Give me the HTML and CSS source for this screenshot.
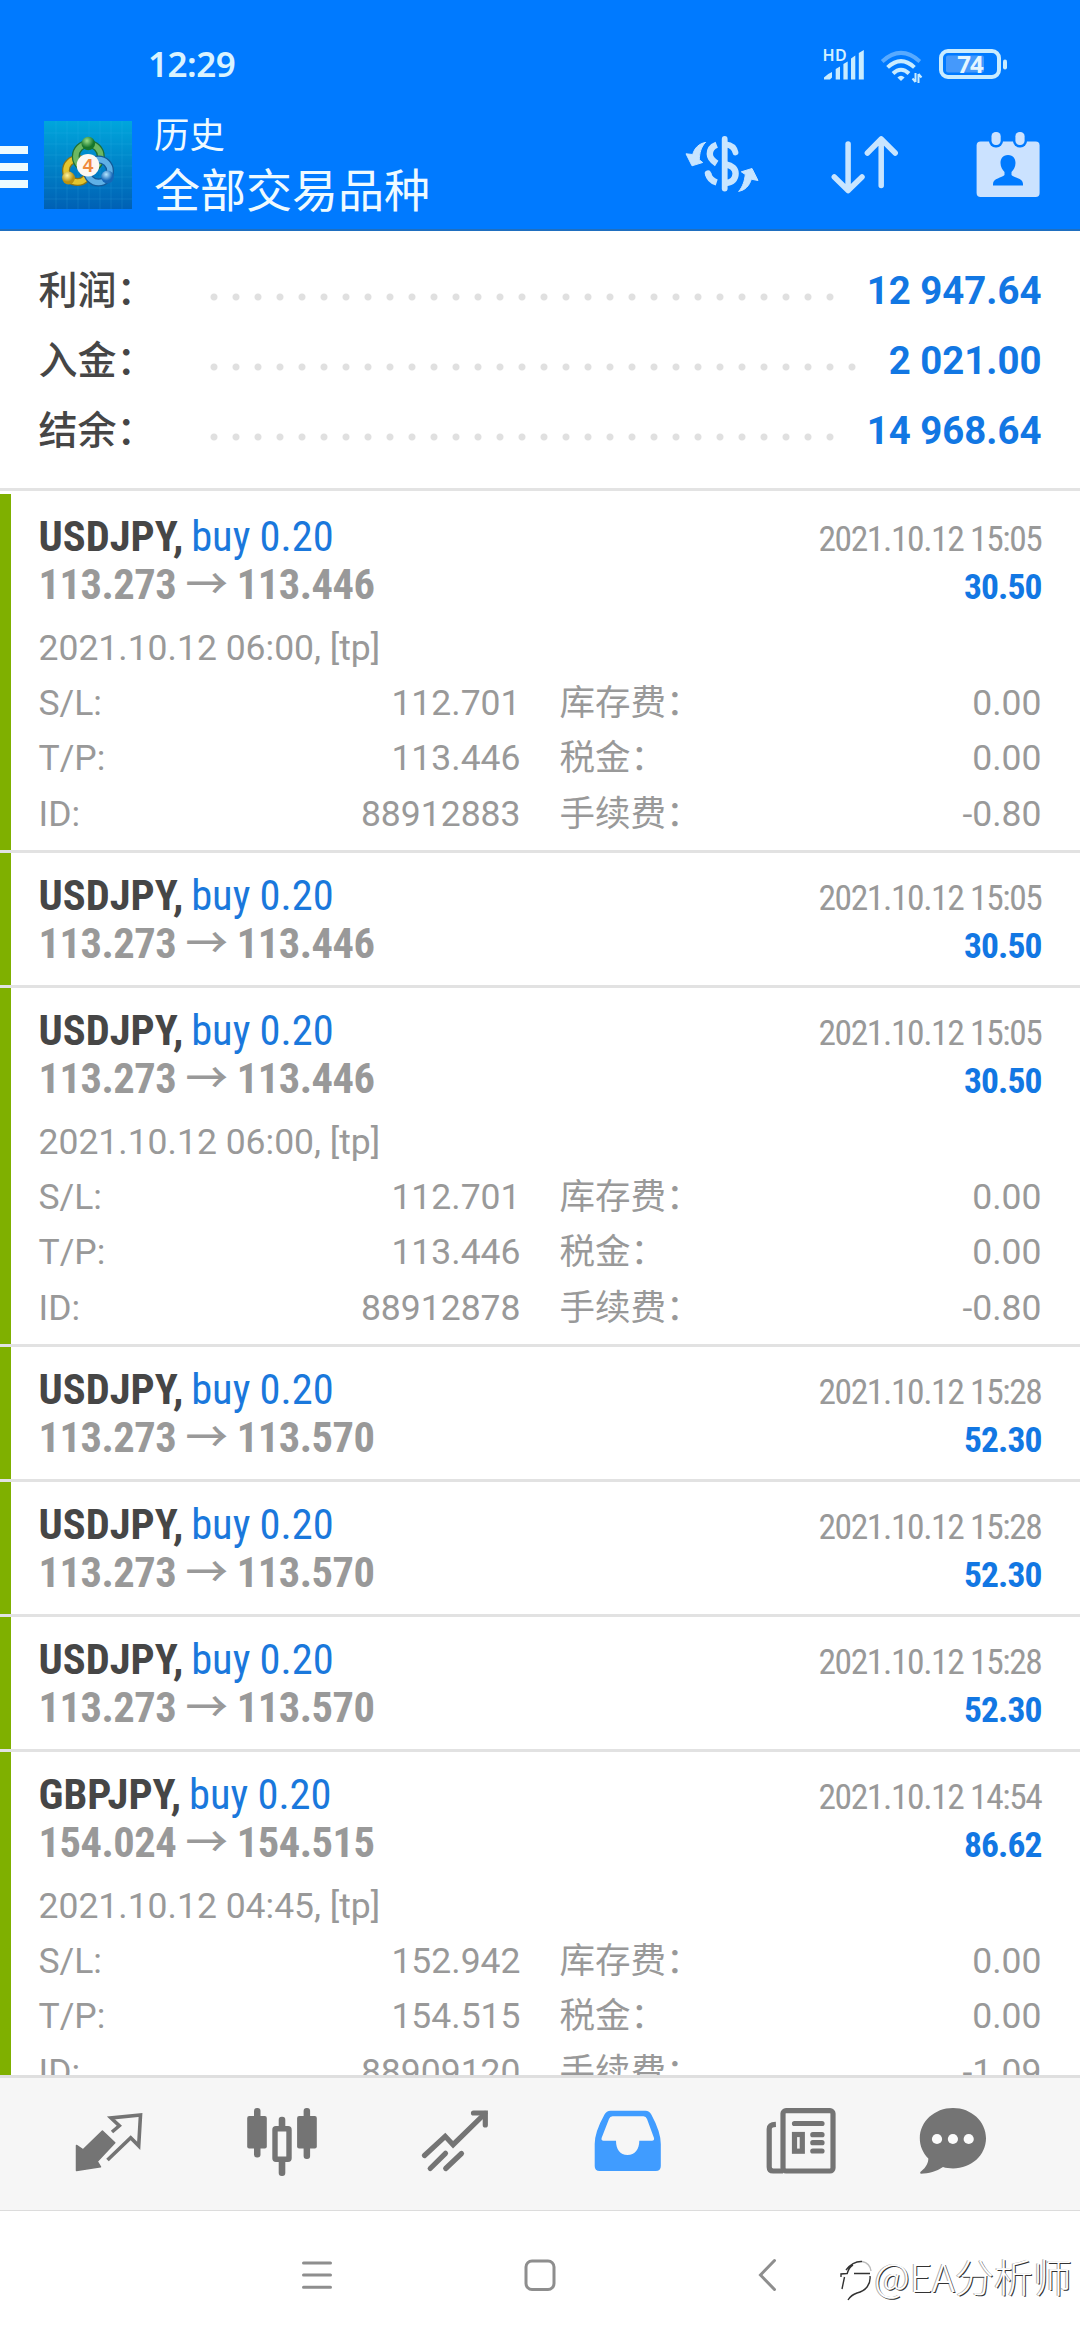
FILE: index.html
```html
<!DOCTYPE html>
<html lang="zh-CN">
<head>
<meta charset="utf-8">
<title>历史</title>
<link rel="stylesheet" href="styles.css">
</head>
<body>
<div class="screen">
  <header class="header">
    <div class="status">
      <span class="clock">12:29</span>
      <div class="status-icons">
        <svg class="signal" width="46" height="36" viewBox="0 0 46 36">
          <text x="0.500" y="15" class="hd">HD</text>
          <path d="M2 33.5V31.5Q6 27.5 10 26V31.5L8 33.5H4ZM13.7 33.5V23L18 20.5V33.5ZM21.4 33.5V18L25.7 15.5V33.5ZM29 33.5V12.5L33.3 9.5V33.5ZM36.8 33.5V7L41.8 4V33.5Z" fill="#c9ecff"/>
        </svg>
        <svg class="wifi" width="46" height="36" viewBox="0 0 46 36" fill="none" stroke="#c9ecff" stroke-width="4">
          <path d="M4.2 15.4Q23 -1.6 41.800 15.400" stroke="#58aaff"/>
          <path d="M9.600 21.400Q23 9 36.400 21.400"/>
          <path d="M15 27.500Q23 20 31 27.500"/>
          <path d="M19.400 31.500Q23 28 26.600 31.500L23 35Z" fill="#c9ecff" stroke="none"/>
          <path d="M37.500 27V36M34.500 32.500L37.500 36M40.500 37V28M43.500 31.500L40.500 28" stroke-width="2"/>
        </svg>
        <svg class="battery" width="70" height="36" viewBox="0 0 70 36">
          <rect x="7" y="9.500" width="38" height="17" rx="2" fill="#4599fb"/>
          <rect x="2" y="5" width="58" height="26" rx="7" fill="none" stroke="#c9ecff" stroke-width="4"/>
          <rect x="64" y="13.500" width="4" height="10" rx="2" fill="#c9ecff"/>
          <text x="31" y="26.500" text-anchor="middle" class="level">74</text>
        </svg>
      </div>
    </div>
    <div class="toolbar">
      <div class="burger"><i></i><i></i><i></i></div>
      <svg class="logo" width="88" height="88" viewBox="0 0 88 88">
        <defs>
          <linearGradient id="sky" x1="0" y1="0" x2="0" y2="1"><stop offset="0" stop-color="#00a6dc"/><stop offset="1" stop-color="#0060b4"/></linearGradient>
          <radialGradient id="gr" cx=".4" cy=".3"><stop offset="0" stop-color="#9be08a"/><stop offset="1" stop-color="#16762c"/></radialGradient>
          <radialGradient id="ye" cx=".4" cy=".3"><stop offset="0" stop-color="#fff6a0"/><stop offset="1" stop-color="#b99110"/></radialGradient>
          <radialGradient id="bl" cx=".4" cy=".3"><stop offset="0" stop-color="#b4e6ff"/><stop offset="1" stop-color="#1567b8"/></radialGradient>
        </defs>
        <rect width="88" height="88" fill="url(#sky)"/>
        <path d="M12 0V88M23 0V88M34 0V88M45 0V88M56 0V88M67 0V88M78 0V88M0 12H88M0 23H88M0 34H88M0 45H88M0 56H88M0 67H88M0 78H88" stroke="#3fc0ee" stroke-opacity=".16"/>
        <g fill="none">
          <circle cx="33.500" cy="49.500" r="11.500" stroke="#8c7414" stroke-width="8"/>
          <circle cx="33.500" cy="49.500" r="11.500" stroke="#e3c52f" stroke-width="5.500"/>
          <circle cx="44.300" cy="35.500" r="12.500" stroke="#1d6f35" stroke-width="8"/>
          <circle cx="44.300" cy="35.500" r="12.500" stroke="#6cb862" stroke-width="5.500"/>
          <circle cx="54.500" cy="50" r="11.500" stroke="#135a98" stroke-width="8"/>
          <circle cx="54.500" cy="50" r="11.500" stroke="#5fb0e6" stroke-width="5.500"/>
        </g>
        <circle cx="44.300" cy="22.500" r="6.800" fill="url(#gr)"/>
        <circle cx="24.500" cy="57" r="6.400" fill="url(#ye)"/>
        <circle cx="63.500" cy="56" r="6.400" fill="url(#bl)"/>
        <circle cx="44" cy="44.300" r="11.300" fill="#fdf8f2"/>
        <text x="44" y="51" text-anchor="middle" class="logo-num">4</text>
      </svg>
      <div class="titles">
        <div class="title-small">历史</div>
        <div class="title-big">全部交易品种</div>
      </div>
      <div class="actions">
        <svg width="80" height="80" viewBox="0 0 80 80" fill="none" stroke="#c8e5ff" stroke-linecap="round">
          <path d="M42.700 16V65.500" stroke-width="5.800"/>
          <path d="M34.700 21.800C29 24 27.800 28 27.800 31C27.800 34.500 30 37.500 34.700 40.500M26 50.500C27 55 30 58 34.700 59.500" stroke-width="6.400" stroke-linecap="butt"/>
          <path d="M26 50.500L26.300 51.300" stroke-width="6.400"/>
          <path d="M44 21.500C49 22 52.500 25 53.500 29.500" stroke-width="5.800"/>
          <path d="M44 41.500C50 42.500 53.600 46 53.600 50.500C53.600 56 50 59.500 44 60" stroke-width="6.400"/>
          <path d="M23.300 19.500C17 20.500 12.500 25 10.700 31.500L4 30.800L10 42.800L20.700 39.500L17.300 36.800C17.500 30 19 24 23.300 19.500ZM57 68.200C63 67.500 67.500 62.500 69.300 56.200L76 57.500L70 45.500L59.300 48.800L63.300 51.500C62.500 58 61 63 57 68.200Z" fill="#c8e5ff" stroke-width="1" stroke-linejoin="round"/>
        </svg>
        <svg width="80" height="80" viewBox="0 0 80 80" fill="none" stroke="#c8e5ff" stroke-width="5.500" stroke-linecap="round" stroke-linejoin="round">
          <path d="M23.100 21V67.500M9.300 54L23.100 67.500L37 54M56.200 62.500V16M42.400 30L56.200 16L70.200 30"/>
        </svg>
        <svg width="80" height="80" viewBox="0 0 80 80">
          <rect x="8.600" y="18.500" width="63" height="55.500" rx="4" fill="#cbe2ff"/>
          <rect x="21" y="6.500" width="14" height="18" rx="6.500" fill="#007aff"/>
          <rect x="45" y="6.500" width="14" height="18" rx="6.500" fill="#007aff"/>
          <rect x="23.500" y="9" width="9.200" height="13" rx="4.200" fill="#cbe2ff"/>
          <rect x="47.400" y="9" width="9.200" height="13" rx="4.200" fill="#cbe2ff"/>
          <path d="M40 32C34.500 32 32.500 36 32.500 40C32.500 44 34.500 47 36.500 49V52C34 55 25 55 25 61V62.500H55V61C55 55 46 55 43.500 52V49C45.500 47 47.500 44 47.500 40C47.500 36 45.500 32 40 32Z" fill="#007aff"/>
        </svg>
      </div>
    </div>
  </header>

  <section class="summary">
    <div class="sum-row"><span class="sum-label">利润：</span><span class="dots"></span><span class="sum-value">12 947.64</span></div>
    <div class="sum-row"><span class="sum-label">入金：</span><span class="dots"></span><span class="sum-value">2 021.00</span></div>
    <div class="sum-row"><span class="sum-label">结余：</span><span class="dots"></span><span class="sum-value">14 968.64</span></div>
  </section>

  <main class="trades">
    <article class="trade">
      <div class="line"><span class="deal"><b>USDJPY,</b> buy 0.20</span><span class="time">2021.10.12 15:05</span></div>
      <div class="line"><span class="prices">113.273 <span class="arrow">→</span> 113.446</span><span class="profit">30.50</span></div>
      <div class="comment">2021.10.12 06:00, [tp]</div>
      <div class="details">
        <div><span>S/L:</span><span>112.701</span></div><div><span>库存费：</span><span>0.00</span></div>
        <div><span>T/P:</span><span>113.446</span></div><div><span>税金：</span><span>0.00</span></div>
        <div><span>ID:</span><span>88912883</span></div><div><span>手续费：</span><span>-0.80</span></div>
      </div>
    </article>
    <article class="trade">
      <div class="line"><span class="deal"><b>USDJPY,</b> buy 0.20</span><span class="time">2021.10.12 15:05</span></div>
      <div class="line"><span class="prices">113.273 <span class="arrow">→</span> 113.446</span><span class="profit">30.50</span></div>
    </article>
    <article class="trade">
      <div class="line"><span class="deal"><b>USDJPY,</b> buy 0.20</span><span class="time">2021.10.12 15:05</span></div>
      <div class="line"><span class="prices">113.273 <span class="arrow">→</span> 113.446</span><span class="profit">30.50</span></div>
      <div class="comment">2021.10.12 06:00, [tp]</div>
      <div class="details">
        <div><span>S/L:</span><span>112.701</span></div><div><span>库存费：</span><span>0.00</span></div>
        <div><span>T/P:</span><span>113.446</span></div><div><span>税金：</span><span>0.00</span></div>
        <div><span>ID:</span><span>88912878</span></div><div><span>手续费：</span><span>-0.80</span></div>
      </div>
    </article>
    <article class="trade">
      <div class="line"><span class="deal"><b>USDJPY,</b> buy 0.20</span><span class="time">2021.10.12 15:28</span></div>
      <div class="line"><span class="prices">113.273 <span class="arrow">→</span> 113.570</span><span class="profit">52.30</span></div>
    </article>
    <article class="trade">
      <div class="line"><span class="deal"><b>USDJPY,</b> buy 0.20</span><span class="time">2021.10.12 15:28</span></div>
      <div class="line"><span class="prices">113.273 <span class="arrow">→</span> 113.570</span><span class="profit">52.30</span></div>
    </article>
    <article class="trade">
      <div class="line"><span class="deal"><b>USDJPY,</b> buy 0.20</span><span class="time">2021.10.12 15:28</span></div>
      <div class="line"><span class="prices">113.273 <span class="arrow">→</span> 113.570</span><span class="profit">52.30</span></div>
    </article>
    <article class="trade">
      <div class="line"><span class="deal"><b>GBPJPY,</b> buy 0.20</span><span class="time">2021.10.12 14:54</span></div>
      <div class="line"><span class="prices">154.024 <span class="arrow">→</span> 154.515</span><span class="profit">86.62</span></div>
      <div class="comment">2021.10.12 04:45, [tp]</div>
      <div class="details">
        <div><span>S/L:</span><span>152.942</span></div><div><span>库存费：</span><span>0.00</span></div>
        <div><span>T/P:</span><span>154.515</span></div><div><span>税金：</span><span>0.00</span></div>
        <div><span>ID:</span><span>88909120</span></div><div><span>手续费：</span><span>-1.09</span></div>
      </div>
    </article>
  </main>

  <nav class="tabs">
    <svg width="80" height="80" viewBox="0 0 80 80">
      <path d="M7.500 41.500L14.100 45.800L33.400 27L45.800 38.700L28.200 57.500L31.500 62.800L7.500 66.500Z" fill="#747474" stroke="#747474" stroke-width="1.500" stroke-linejoin="round"/>
      <path d="M38.500 56L61.700 33.700L69.700 41.800L71.500 11L42 14L50.300 21.800L43 28" fill="none" stroke="#747474" stroke-width="3.600"/>
    </svg>
    <svg width="80" height="80" viewBox="0 0 80 80" fill="#747474">
      <rect x="5.200" y="12" width="19.600" height="32.500" rx="2"/><rect x="12" y="4" width="6.500" height="49.500" rx="3"/>
      <rect x="55.100" y="12" width="19.700" height="32.500" rx="2"/><rect x="61.600" y="4" width="6.500" height="51" rx="3"/>
      <rect x="36.700" y="12.700" width="6.600" height="14" rx="3"/><rect x="36.700" y="54" width="6.600" height="18" rx="3"/>
      <rect x="33" y="24.700" width="14" height="30.600" rx="1" fill="none" stroke="#747474" stroke-width="5.400"/>
    </svg>
    <svg width="80" height="80" viewBox="0 0 80 80" fill="none" stroke="#747474" stroke-width="5.200" stroke-linecap="round">
      <path d="M9.500 51.500L30.200 32.300L38.100 40.700L70 9.500"/>
      <path d="M58.500 9H70.300V21" stroke-linejoin="miter"/>
      <path d="M15.200 64.500L30.500 49.300M30.700 64.500L46.500 49.500"/>
    </svg>
    <svg width="80" height="80" viewBox="0 0 80 80">
      <path fill-rule="evenodd" fill="#409cff" d="M22.500 6.700H57.500Q61.500 6.700 63.300 10.500Q72.800 28 72.800 40V62Q72.800 67 67.800 67H11.700Q6.700 67 6.700 62V40Q6.700 28 16.500 10.500Q18.500 6.700 22.500 6.700ZM24.500 12.300Q22 12.300 21 15L13.600 34Q13 36.700 15.500 36.700H28C28 45 32 51 39.500 51C47 51 51.300 45 51.300 36.700H64Q66.500 36.700 66 34L59 15Q58 12.300 55.500 12.300Z"/>
    </svg>
    <svg width="80" height="80" viewBox="0 0 80 80" fill="none" stroke="#747474" stroke-width="5.200">
      <rect x="22" y="6.600" width="50" height="60.400" rx="3"/>
      <path d="M22 67H12.200Q8.200 67 8.200 63V25Q8.200 20.500 14.900 20.300"/>
      <path d="M33.500 19.500H61M51.800 30.700H61M51.800 38.700H61M51.800 47H61" stroke-linecap="round"/>
      <rect x="33.500" y="30.500" width="7.800" height="16.700"/>
    </svg>
    <svg width="80" height="80" viewBox="0 0 80 80">
      <path fill="#747474" d="M40 4C58.500 4 73 17.500 73 34.200C73 51 58.500 64.400 40 64.400C36.500 64.400 33 64 30 63C23.500 67.500 15.500 69.700 8 69.700C6.500 69.500 7 68 8.500 67C13 63.500 15.500 58.500 15.300 54.500C10 49 6.800 42 6.800 34.200C6.800 17.500 21.500 4 40 4Z"/>
      <circle cx="24" cy="35" r="5.100" fill="#fbfbfb"/><circle cx="39.900" cy="35" r="5.100" fill="#fbfbfb"/><circle cx="55.700" cy="35" r="5.100" fill="#fbfbfb"/>
    </svg>
  </nav>

  <footer class="sysnav">
    <svg width="40" height="40" viewBox="0 0 40 40"><path d="M6.500 8H33.500M6.500 20H33.500M6.500 32.300H33.500"/></svg>
    <svg width="40" height="40" viewBox="0 0 40 40"><rect x="6" y="6" width="28" height="28.500" rx="6"/></svg>
    <svg width="40" height="40" viewBox="0 0 40 40"><path d="M31.500 5.500L17.500 20L31.500 34.500"/></svg>
    <div class="watermark">
      <svg width="34" height="44" viewBox="0 0 34 44" fill="none" stroke="#333" stroke-width="1.400"><path d="M7 12Q14 3 23 3.500M2 19L2 16L8 15.500M8 16Q10 9 14 7M5.500 19L3 31M15 15.500H31M31 18C32 26 27 33 18 35Q12 37 9 42" /><path d="M23 3.500Q31 5 32 13" stroke="#bbb"/></svg>
      <span>@EA分析师</span>
    </div>
  </footer>
</div>
</body>
</html>
```
FILE: styles.css
```css
* { box-sizing: border-box; }

body {
  margin: 0;
  background: #fff;
  font-family: Roboto, "Noto Sans CJK SC", sans-serif;
}

.screen {
  display: flex;
  flex-direction: column;
  width: 1080px;
  height: 2340px;
  overflow: hidden;
  background: #fff;
}

/* Header */
.header {
  flex: none;
  height: 231px;
  background: #007aff;
  border-bottom: 2px solid #1f6fc0;
}

.status {
  display: flex;
  justify-content: space-between;
  align-items: center;
  height: 96px;
  padding: 32px 71px 0 148px;
}

.clock {
  font: 600 35px/48px "Noto Sans", sans-serif;
  letter-spacing: -0.5px;
  color: #d9f3ff;
}

.status-icons { display: flex; align-items: center; }
.status-icons svg { overflow: visible; }
.signal { margin-right: 10px; }
.wifi { margin-right: 15px; }
.hd { font: 600 16px "Noto Sans", sans-serif; letter-spacing: 0.5px; fill: #d4f0ff; }
.level { font: 700 24px "Noto Sans", sans-serif; letter-spacing: -1px; fill: #e4f6ff; }

.toolbar {
  display: flex;
  align-items: center;
  height: 133px;
  padding-right: 32px;
}

.burger {
  display: flex;
  flex-direction: column;
  gap: 9px;
  width: 28px;
  margin-top: 8px;
}

.burger i { height: 8px; background: #ecfbff; }

.logo { margin: 4px 22px 0 16px; }
.logo-num { font: 700 19px "Liberation Sans", sans-serif; fill: #ef8a3c; }

.titles { flex: 1; color: #effaff; font-family: "Noto Sans CJK SC", sans-serif; }
.title-small { font-size: 35.4px; line-height: 49px; }
.title-big { font-size: 46px; line-height: 60px; }

.actions { display: flex; gap: 63px; }

/* Account totals */
.summary {
  flex: none;
  height: 260px;
  padding: 25px 38.5px 0 38.5px;
  border-bottom: 3px solid #e3e3e3;
}

.sum-row {
  display: flex;
  height: 70px;
  line-height: 70px;
}

.sum-label {
  width: 171.5px;
  font-size: 39px;
  font-weight: 500;
  color: #464646;
}

.dots {
  flex: 1;
  height: 8px;
  margin: 37px 28px 0 0;
  background: radial-gradient(circle at 4px 4px, #e0e0e0 3px, rgba(224, 224, 224, 0) 4px) 0 0 / 22px 8px repeat-x;
}

.sum-value {
  font-size: 38.4px;
  font-weight: 700;
  color: #1277e3;
}

/* Trade list */
.trades {
  flex: 1;
  min-height: 0;
  overflow: hidden;
  padding-top: 3px;
}

.trade {
  height: 135px;
  padding: 18.5px 38.5px 0;
  background: linear-gradient(#7fb000, #7fb000) 0 0 / 11px 100% no-repeat padding-box;
  border-bottom: 3px solid #e2e2e2;
  font-size: 35.5px;
  color: #999;
}

.trade:has(.details) { height: 359px; }

.line {
  display: flex;
  justify-content: space-between;
  align-items: baseline;
  height: 48px;
  line-height: 48px;
  font-family: "Roboto Condensed", "Noto Sans CJK SC", sans-serif;
}

.deal { font-size: 42.5px; word-spacing: -0.5px; color: #1a78dc; }
.deal b { margin-right: -1.5px; color: #464646; }
.time { letter-spacing: -1.4px; }
.prices { font-size: 42.5px; font-weight: 700; letter-spacing: -0.5px; }
.arrow { font-weight: 500; }
.profit { font-weight: 700; letter-spacing: -0.9px; color: #1277e3; }

.comment { margin-top: 11px; line-height: 56px; }

.details {
  display: grid;
  grid-template-columns: 1fr 1fr;
  column-gap: 39px;
  line-height: 55.5px;
}

.details div { display: flex; justify-content: space-between; }

/* Bottom tabs */
.tabs {
  flex: none;
  display: grid;
  grid-template-columns: repeat(5, 173px) 132px;
  place-items: center;
  height: 136px;
  padding-left: 22px;
  background: #f6f6f6;
  border-top: 3px solid #dfdfdf;
  border-bottom: 1px solid #dcdcdc;
}

/* System navigation */
.sysnav {
  position: relative;
  flex: none;
  display: grid;
  grid-template-columns: repeat(3, 223px);
  place-items: center;
  height: 129px;
  padding: 0 0 2px 205px;
}

.sysnav > svg {
  fill: none;
  stroke: #8e8e8e;
  stroke-width: 3px;
  stroke-linecap: round;
}

.watermark {
  position: absolute;
  right: 8px;
  top: 36px;
  display: flex;
  align-items: center;
  font: 300 39px/56px "Noto Sans CJK SC", sans-serif;
  color: #fff;
  text-shadow: 1px 1px 0 #333, -1px 0 0 #aaa;
}
.watermark svg { margin: 10px 1px 0 0; }
```
